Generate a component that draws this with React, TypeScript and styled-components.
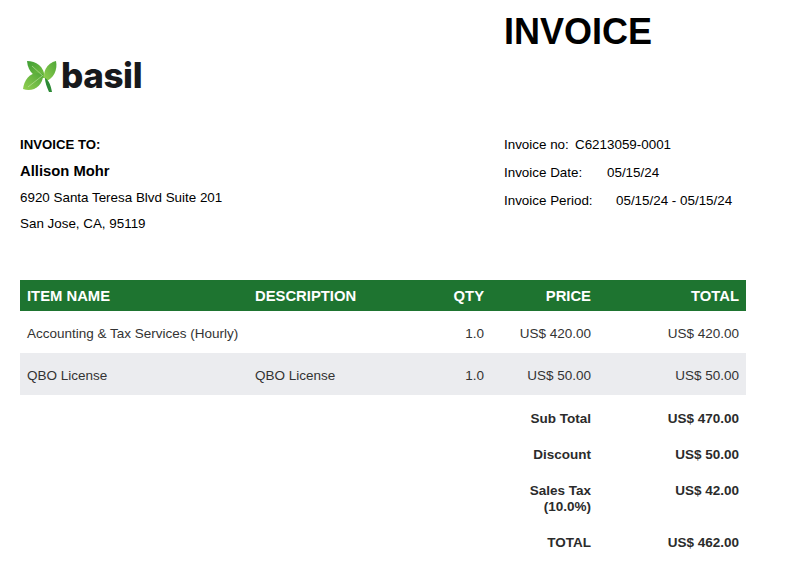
import React from 'react';
import styled, { createGlobalStyle } from 'styled-components';

const GlobalStyle = createGlobalStyle`
  html, body {
    margin: 0;
    padding: 0;
    background: #fff;
    font-family: "Liberation Sans", Arial, sans-serif;
    color: #000;
  }
`;

const Page = styled.div`
  width: 726px;
  height: 572px;
  padding-left: 20px;
  overflow: hidden;
`;

const TopRow = styled.header`
  display: grid;
  grid-template-columns: 484px 1fr;
  height: 131px;
`;

const LogoWrap = styled.div`
  display: flex;
  align-items: center;
  gap: 3px;
  height: 32px;
  margin: 60px 0 0 3px;
`;

const LogoText = styled.span`
  font-family: Inter, sans-serif;
  font-size: 35px;
  font-weight: 800;
  letter-spacing: -0.4px;
  color: #17191c;
  line-height: 30px;
  height: 32px;
`;

const Title = styled.h1`
  margin: 10px 0 0;
  font-size: 36px;
  line-height: 43px;
  font-weight: 700;
`;

const InfoRow = styled.section`
  display: grid;
  grid-template-columns: 484px 1fr;
  height: 149px;
`;

const Bill = styled.div`
  display: flex;
  flex-direction: column;
  padding-top: 1px;
`;

const BillLine = styled.div<{ $strong?: boolean; $big?: boolean }>`
  height: 26px;
  line-height: 26px;
  margin-bottom: ${p => (p.$big ? '1px' : '0')};
  font-size: ${p => (p.$big ? '14.8px' : p.$strong ? '13.2px' : '13.4px')};
  font-weight: ${p => (p.$strong ? 700 : 400)};
`;

const Meta = styled.div`
  display: flex;
  flex-direction: column;
`;

const MetaLine = styled.div`
  height: 28px;
  line-height: 28px;
  font-size: 13.4px;
  display: flex;
`;

const MetaLabel = styled.span<{ $w: number }>`
  width: ${p => p.$w}px;
`;

const Grid = `
  display: grid;
  grid-template-columns: 228px 175px 68px 107px 148px;
`;

const HeadRow = styled.div`
  ${Grid}
  height: 31px;
  align-items: center;
  background: #1e7430;
  color: #fff;
  font-size: 14.8px;
  font-weight: 700;
`;

const BodyRow = styled.div<{ $alt?: boolean }>`
  ${Grid}
  height: 42px;
  padding-top: 2px;
  box-sizing: border-box;
  align-items: center;
  background: ${p => (p.$alt ? '#ebecef' : '#fff')};
  color: #333;
  font-size: 13.5px;
`;

const Cell = styled.div<{ $right?: boolean }>`
  padding: 0 7px;
  text-align: ${p => (p.$right ? 'right' : 'left')};
  white-space: nowrap;
`;

const Summary = styled.div`
  display: flex;
  flex-direction: column;
  padding-top: 6px;
`;

const SummaryRow = styled.div`
  display: grid;
  grid-template-columns: 578px 148px;
  padding: 10px 0;
  font-size: 13.5px;
  font-weight: 700;
  color: #2b2b2b;
`;

const SummaryLabel = styled.div`
  justify-self: end;
  padding: 0 7px;
  width: 80px;
  text-align: right;
  line-height: 16px;
`;

const SummaryValue = styled.div`
  padding: 0 7px;
  text-align: right;
  line-height: 16px;
`;

const Leaves = () => (
  <svg width="35" height="32" viewBox="0 0 35 32">
    <defs>
      <linearGradient id="leafA" x1="0" y1="0" x2="1" y2="1">
        <stop offset="0" stopColor="#3f9e35" />
        <stop offset="1" stopColor="#7cc243" />
      </linearGradient>
      <linearGradient id="leafB" x1="1" y1="0" x2="0" y2="1">
        <stop offset="0" stopColor="#4fa638" />
        <stop offset="1" stopColor="#93d050" />
      </linearGradient>
    </defs>
    <path d="M4 1 C13 1 21 6 22 18 C15 19 5 14 4 1Z" fill="url(#leafA)" />
    <path d="M33 1 C35 10 30 19 23 21 C18 13 24 3 33 1Z" fill="url(#leafB)" />
    <path d="M0 29 C1 19 9 10 20 14 C21 24 11 33 0 29Z" fill="url(#leafB)" />
    <path d="M22 18 C26 20 28 26 29 32 L26 32 C24 27 22 23 22 18Z" fill="#2c8a35" />
    <path d="M5 27 L19 16 M9 6 L20 16" stroke="#c6e6a4" strokeWidth="0.6" fill="none" />
  </svg>
);

const items = [
  { name: 'Accounting & Tax Services (Hourly)', description: '', qty: '1.0', price: 'US$ 420.00', total: 'US$ 420.00' },
  { name: 'QBO License', description: 'QBO License', qty: '1.0', price: 'US$ 50.00', total: 'US$ 50.00' },
];

const totals = [
  { label: 'Sub Total', value: 'US$ 470.00' },
  { label: 'Discount', value: 'US$ 50.00' },
  { label: 'Sales Tax (10.0%)', value: 'US$ 42.00' },
  { label: 'TOTAL', value: 'US$ 462.00' },
];

const App: React.FC = () => {
  return (
    <Page>
      <GlobalStyle />
      <TopRow>
        <LogoWrap>
          <Leaves />
          <LogoText>basil</LogoText>
        </LogoWrap>
        <Title>INVOICE</Title>
      </TopRow>
      <InfoRow>
        <Bill>
          <BillLine $strong>INVOICE TO:</BillLine>
          <BillLine $strong $big>Allison Mohr</BillLine>
          <BillLine>6920 Santa Teresa Blvd Suite 201</BillLine>
          <BillLine>San Jose, CA, 95119</BillLine>
        </Bill>
        <Meta>
          <MetaLine><MetaLabel $w={71}>Invoice no:</MetaLabel>C6213059-0001</MetaLine>
          <MetaLine><MetaLabel $w={103}>Invoice Date:</MetaLabel>05/15/24</MetaLine>
          <MetaLine><MetaLabel $w={112}>Invoice Period:</MetaLabel>05/15/24 - 05/15/24</MetaLine>
        </Meta>
      </InfoRow>
      <HeadRow>
        <Cell>ITEM NAME</Cell>
        <Cell>DESCRIPTION</Cell>
        <Cell $right>QTY</Cell>
        <Cell $right>PRICE</Cell>
        <Cell $right>TOTAL</Cell>
      </HeadRow>
      {items.map((item, index) => (
        <BodyRow key={index} $alt={index % 2 === 1}>
          <Cell>{item.name}</Cell>
          <Cell>{item.description}</Cell>
          <Cell $right>{item.qty}</Cell>
          <Cell $right>{item.price}</Cell>
          <Cell $right>{item.total}</Cell>
        </BodyRow>
      ))}
      <Summary>
        {totals.map((row, index) => (
          <SummaryRow key={index}>
            <SummaryLabel>{row.label}</SummaryLabel>
            <SummaryValue>{row.value}</SummaryValue>
          </SummaryRow>
        ))}
      </Summary>
    </Page>
  );
};

export default App;
